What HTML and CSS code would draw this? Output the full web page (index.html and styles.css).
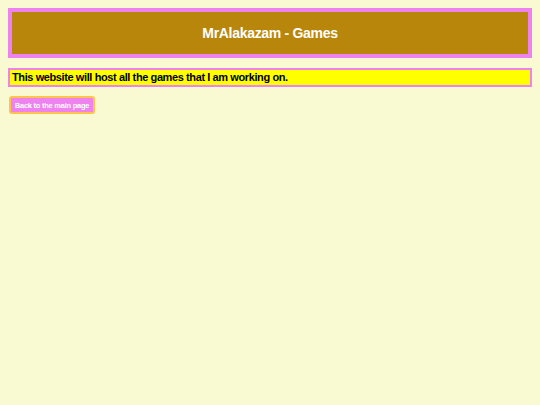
FILE: index.html
```html
<!DOCTYPE html>
<html>
<head>
<meta charset="utf-8">
<title>MrAlakazam - Games</title>
<link rel="stylesheet" href="styles.css">
</head>
<body>
<header class="banner">
  <h1 class="title">MrAlakazam - Games</h1>
</header>
<p class="intro">This website will host all the games that I am working on.</p>
<button class="back">Back to the main page</button>
</body>
</html>
```

FILE: styles.css
```css
html, body {
  margin: 0;
  padding: 0;
}
body {
  background: #fafad2;
  padding: 8px;
  font-family: "Liberation Sans", Arial, sans-serif;
}
.banner {
  border: 4px solid #ee82ee;
  background: #b8860b;
  height: 42px;
  display: flex;
  align-items: center;
  justify-content: center;
}
.title {
  margin: 0;
  color: #ffffff;
  font-size: 14px;
  font-weight: bold;
  letter-spacing: -0.3px;
}
.intro {
  margin: 10px 0 0 0;
  background: #ffff00;
  border: 2px solid #ee82ee;
  padding: 0 2px;
  font-size: 11px;
  font-weight: bold;
  letter-spacing: -0.4px;
  line-height: 15px;
  color: #000;
}
.back {
  margin-top: 9px;
  margin-left: 1px;
  background: #ee82ee;
  border: 2px solid #ffc34d;
  border-radius: 3px;
  color: #fff;
  font-family: "Liberation Sans", Arial, sans-serif;
  font-size: 7.5px;
  font-weight: bold;
  letter-spacing: -0.25px;
  white-space: nowrap;
  padding: 0 2px;
  height: 18px;
  width: 86px;
}
```
